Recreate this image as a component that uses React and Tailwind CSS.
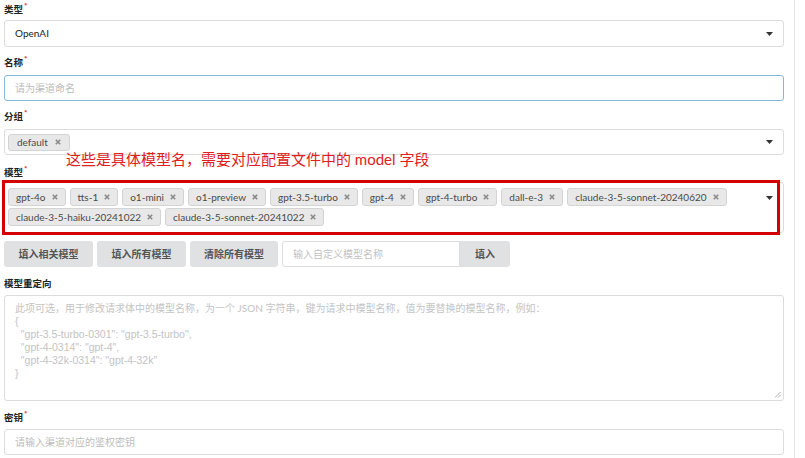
import React from 'react';

const FONT = { fontFamily: 'Lato, "Noto Sans CJK SC", "Noto Sans", sans-serif' };

const Label = ({ text, req = true, className = '' }) => (
  <div className={`flex items-start text-[9.5px] leading-[12px] font-bold text-[#222] ${className}`}>
    {text}
    {req && <span className="text-[#db2828] text-[8px] leading-[8px] ml-[1px] -mt-[2px]">*</span>}
  </div>
);

const Caret = () => (
  <svg width="7" height="4" viewBox="0 0 7 4" className="absolute right-[10px] top-1/2 -translate-y-1/2">
    <path d="M0 0h7L3.5 4z" fill="#333" />
  </svg>
);

const XIcon = () => (
  <svg width="6" height="6" viewBox="0 0 6 6">
    <path d="M0.8 0.8l4.4 4.4M5.2 0.8L0.8 5.2" stroke="#8a8a8a" strokeWidth="1.6" />
  </svg>
);

const Tag = ({ name }) => (
  <span className="h-[18px] pl-[7px] pr-[7px] flex items-center gap-[6px] text-[10px] text-[#4a4a4a] bg-[#e8e8e8] border border-[#d4d4d5] rounded-[3px] whitespace-nowrap">
    {name}
    <XIcon />
  </span>
);

const models = [
  'gpt-4o', 'tts-1', 'o1-mini', 'o1-preview', 'gpt-3.5-turbo', 'gpt-4', 'gpt-4-turbo', 'dall-e-3',
  'claude-3-5-sonnet-20240620', 'claude-3-5-haiku-20241022', 'claude-3-5-sonnet-20241022',
];

const jsonLines = [
  '{',
  '  "gpt-3.5-turbo-0301": "gpt-3.5-turbo",',
  '  "gpt-4-0314": "gpt-4",',
  '  "gpt-4-32k-0314": "gpt-4-32k"',
  '}',
];

export default function App() {
  return (
    <div className="flex w-[805px] h-[458px] overflow-hidden bg-white" style={FONT}>
      <div className="w-[795px] shrink-0 border-r border-[#e6e6e6] pl-[4px] pt-[4px]">
        <div className="w-[780px]">
          <Label text="类型" />
          <div className="relative mt-[4px] h-[27px] rounded-[3px] border border-[#dcdcdd] px-[10px] flex items-center text-[10px] text-[#212121]">
            OpenAI
            <Caret />
          </div>

          <Label text="名称" className="mt-[10px]" />
          <input
            className="mt-[6px] block w-full h-[26px] rounded-[3px] border border-[#85b7d9] px-[10px] text-[10px] text-[#212121] outline-none placeholder:text-[#bdbdbd]"
            placeholder="请为渠道命名"
          />

          <Label text="分组" className="mt-[10px]" />
          <div className="relative mt-[6px] h-[26px] rounded-[3px] border border-[#dcdcdd] pl-[3px] flex items-center">
            <span className="h-[17px] pl-[8px] pr-[8px] flex items-center gap-[7px] text-[10px] text-[#4a4a4a] bg-[#e8e8e8] border border-[#d4d4d5] rounded-[3px]">
              default
              <XIcon />
            </span>
            <Caret />
          </div>

          <div className="relative mt-[12px]">
            <div className="absolute left-[62px] -top-[17px] text-[15px] leading-[18px] text-[#e0201c] whitespace-nowrap">
              这些是具体模型名，需要对应配置文件中的 model 字段
            </div>
            <Label text="模型" />
            <div className="relative mt-[3px] h-[51px] rounded-[3px] border border-[#dcdcdd] pl-[3px] pt-[5px] pr-[30px]">
              <div className="flex flex-wrap gap-x-[4px] gap-y-[2px]">
                {models.map((m) => (
                  <Tag key={m} name={m} />
                ))}
              </div>
              <svg width="7" height="4" viewBox="0 0 7 4" className="absolute right-[10px] top-[13px]">
                <path d="M0 0h7L3.5 4z" fill="#333" />
              </svg>
            </div>
            <div className="absolute -left-[2px] right-[4px] top-[13px] h-[55px] border-[3px] border-[#d40000] pointer-events-none" />
          </div>

          <div className="mt-[8px] flex gap-[4px] h-[26px] text-[10px] font-bold text-[#555]">
            <button className="w-[89px] rounded-[3px] bg-[#e0e1e2]">填入相关模型</button>
            <button className="w-[89px] rounded-[3px] bg-[#e0e1e2]">填入所有模型</button>
            <button className="w-[88px] rounded-[3px] bg-[#e0e1e2]">清除所有模型</button>
            <div className="flex">
              <input
                className="w-[178px] h-[26px] rounded-l-[3px] border border-[#dcdcdd] px-[10px] text-[10px] font-normal outline-none placeholder:text-[#c2c2c2]"
                placeholder="输入自定义模型名称"
              />
              <button className="w-[50px] rounded-r-[3px] bg-[#e0e1e2]">填入</button>
            </div>
          </div>

          <Label text="模型重定向" req={false} className="mt-[11px]" />
          <div className="relative mt-[5px] h-[106px] rounded-[3px] border border-[#dcdcdd] px-[10px] pt-[6px] text-[10px] leading-[13px] text-[#c4c4c4]">
            <div>此项可选，用于修改请求体中的模型名称，为一个 JSON 字符串，键为请求中模型名称，值为要替换的模型名称，例如：</div>
            {jsonLines.map((l, i) => (
              <div
                key={i}
                className="whitespace-pre text-[10.5px]"
                style={{ fontFamily: '"Liberation Sans", sans-serif' }}
              >
                {l}
              </div>
            ))}
            <svg width="7" height="7" viewBox="0 0 7 7" className="absolute right-[2px] bottom-[2px]">
              <path d="M6.5 1L1 6.5M6.5 4L4 6.5" stroke="#999" strokeWidth="0.8" />
            </svg>
          </div>

          <Label text="密钥" className="mt-[11px]" />
          <input
            className="mt-[5px] block w-full h-[26px] rounded-[3px] border border-[#dcdcdd] px-[10px] text-[10px] outline-none placeholder:text-[#bdbdbd]"
            placeholder="请输入渠道对应的鉴权密钥"
          />
        </div>
      </div>
    </div>
  );
}
